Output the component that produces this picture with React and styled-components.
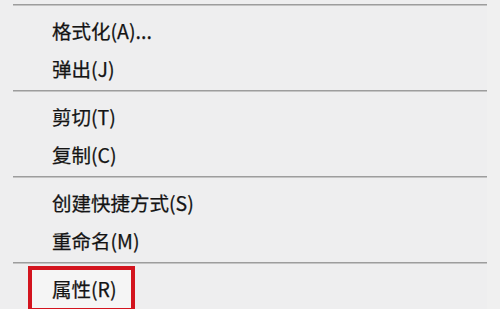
import React from 'react';
import styled, { createGlobalStyle } from 'styled-components';

const GlobalStyle = createGlobalStyle`
  html, body {
    margin: 0;
    padding: 0;
    background: #f0f0f0;
    overflow: hidden;
  }
`;

const groups = [
  [{ label: '格式化(A)...' }, { label: '弹出(J)' }],
  [{ label: '剪切(T)' }, { label: '复制(C)' }],
  [{ label: '创建快捷方式(S)' }, { label: '重命名(M)' }],
  [{ label: '属性(R)', marked: true }],
];

const App = () => {
  return (
    <>
      <GlobalStyle />
      <Menu>
        {groups.map((items, i) => (
          <Group key={i}>
            <Separator />
            {items.map((item) =>
              item.marked ? (
                <MarkedItem key={item.label}>
                  <Label>{item.label}</Label>
                </MarkedItem>
              ) : (
                <Item key={item.label}>
                  <Label>{item.label}</Label>
                </Item>
              )
            )}
          </Group>
        ))}
      </Menu>
    </>
  );
};

export default App;

const Menu = styled.div`
  width: 487px;
  height: 309px;
  background: #eeeeef;
  font-family: 'Noto Sans CJK SC', 'Noto Sans', sans-serif;
  color: #141414;
  overflow: hidden;
`;

const Group = styled.div`
  display: flex;
  flex-direction: column;
`;

const Separator = styled.div`
  height: 10px;
  padding-left: 13px;
  box-sizing: border-box;
  &::after {
    content: '';
    display: block;
    margin-top: 4px;
    height: 1px;
    background: #9d9d9d;
    box-shadow: 0 1px 0 #c4c4c4;
  }
`;

const Item = styled.div`
  display: flex;
  align-items: center;
  height: 38px;
  padding: 3px 0 0 52px;
  box-sizing: border-box;
`;

const MarkedItem = styled.div`
  display: flex;
  align-items: center;
  align-self: flex-start;
  margin: -2px 0 0 28px;
  width: 107px;
  height: 46px;
  padding-left: 20px;
  box-sizing: border-box;
  border: 4px solid #d3141e;
  background: #f5f5f5;
`;

const Label = styled.span`
  font-size: 19.5px;
  line-height: 1;
  white-space: nowrap;
  -webkit-text-stroke: 0.25px #141414;
`;
